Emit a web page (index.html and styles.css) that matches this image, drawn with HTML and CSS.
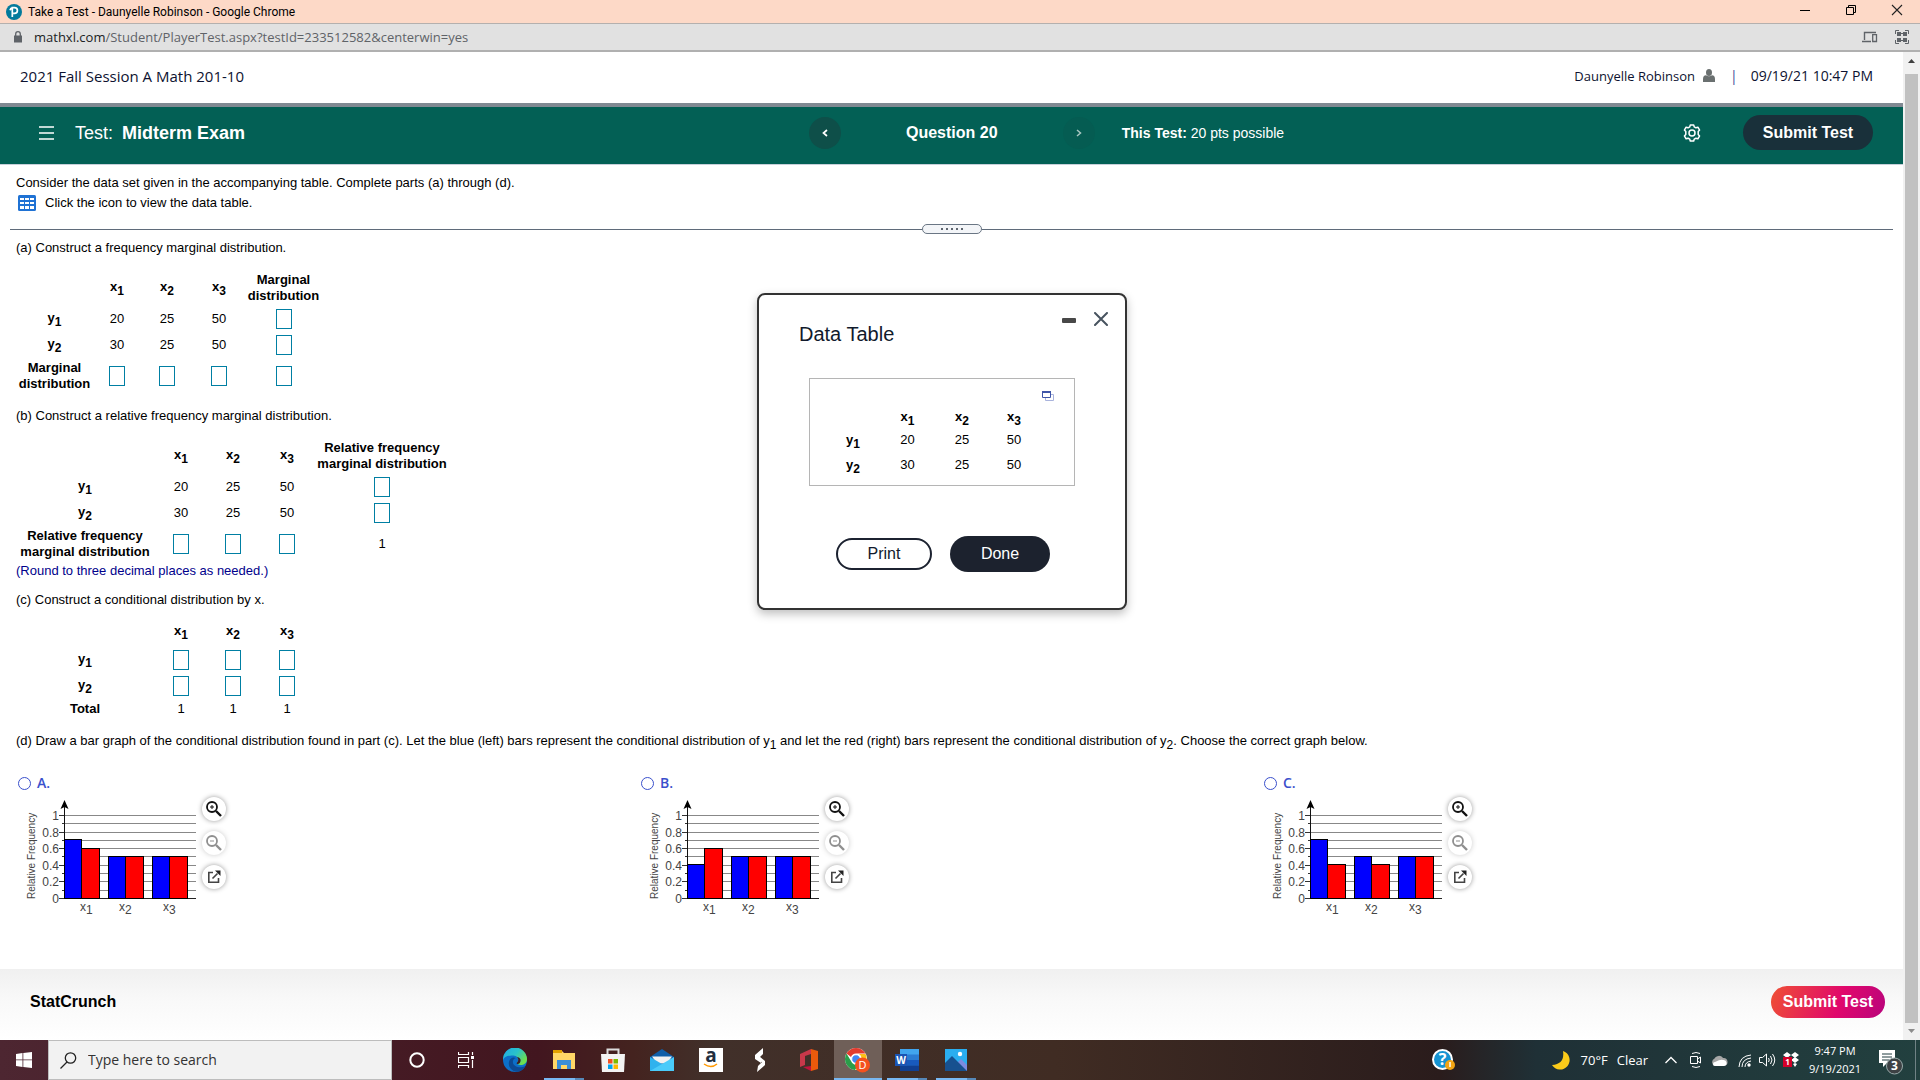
FILE: index.html
```
<!DOCTYPE html>
<html lang="en">
<head>
<meta charset="utf-8">
<title>Take a Test - Daunyelle Robinson</title>
<link rel="stylesheet" href="styles.css">
</head>
<body>
<div class="titlebar">
  <svg class="favicon" width="16" height="16" viewBox="0 0 16 16"><circle cx="8" cy="8" r="8" fill="#047a9c"/><path d="M6.3 13V3.6h2.2a2.9 2.9 0 0 1 0 5.8H7.2M4 6.2A4 4 0 0 1 6.3 3.6" fill="none" stroke="#fff" stroke-width="1.7"/></svg>
  <span class="window-title">Take a Test - Daunyelle Robinson - Google Chrome</span>
  <div class="window-controls">
    <button aria-label="Minimize"><svg width="12" height="12"><path d="M1 6.5h10" stroke="#000"/></svg></button>
    <button aria-label="Restore"><svg width="12" height="12" fill="none" stroke="#000"><path d="M1.5 3.500h7v7h-7zM3.500 3.500v-2h7v7h-2"/></svg></button>
    <button aria-label="Close"><svg width="12" height="12"><path d="M1 1l10 10M11 1L1 11" stroke="#222" stroke-width="1.100"/></svg></button>
  </div>
</div>
<div class="urlbar">
  <svg width="10" height="12" viewBox="0 0 10 12"><path d="M1 4.500h8v7H1z" fill="#5f6368"/><path d="M2.700 5V3a2.300 2.300 0 0 1 4.600 0v2" fill="none" stroke="#5f6368" stroke-width="1.300"/></svg>
  <span class="url"><b>mathxl.com</b>/Student/PlayerTest.aspx?testId=233512582&amp;centerwin=yes</span>
  <svg class="devices" width="16" height="12" viewBox="0 0 16 12" fill="none" stroke="#5f6368"><path d="M2.500 9V1.500H14M0 10.500h9" stroke-width="1.400"/><path d="M10.700 3.700h3.800v6.800h-3.800z" stroke-width="1.300"/></svg>
  <svg class="qr" width="14" height="14" viewBox="0 0 14 14"><path d="M.500 4V.500H4M10 .500h3.500V4M13.500 10v3.500H10M4 13.500H.500V10" fill="none" stroke="#5f6368"/><path d="M2 2h4v4H2zM8 2h4v4H8zM2 8h4v4H2zM8 8h4v4H8zM6 3h2v1H6zM6 10h2v1H6z" fill="#5f6368"/></svg>
</div>

<div class="viewport">
<div class="page">
  <header class="course">
    <span class="course-name">2021 Fall Session A Math 201-10</span>
    <span class="user">Daunyelle Robinson</span>
    <svg width="12" height="13" viewBox="0 0 12 13" fill="#6a7070"><ellipse cx="6" cy="3.500" rx="3" ry="3.500"/><path d="M0 13v-3q0-3.500 3-3.700 3 2 6 0 3 .200 3 3.700v3z"/></svg>
    <span class="bar">|</span>
    <span class="clock-text">09/19/21 10:47 PM</span>
  </header>

  <div class="testbar">
    <div class="test-left">
      <button aria-label="Menu"><svg width="15" height="14"><path d="M0 1h15M0 7h15M0 13h15" stroke="#fff" stroke-width="1.500"/></svg></button>
      <h1><span>Test:</span><strong>Midterm Exam</strong></h1>
    </div>
    <nav class="question-nav" aria-label="Questions">
      <button class="prev" aria-label="Previous question"><svg width="6" height="8"><path d="M5 1L1.500 4 5 7" fill="none" stroke="#fff" stroke-width="1.700"/></svg></button>
      <strong>Question 20</strong>
      <button class="next" aria-label="Next question"><svg width="6" height="8"><path d="M1 1l3.500 3L1 7" fill="none" stroke="#a9c7c2" stroke-width="1.500"/></svg></button>
    </nav>
    <div class="test-right">
      <span class="points"><b>This Test:</b> 20 pts possible</span>
      <button class="gear" aria-label="Settings"><svg width="18" height="18" viewBox="0 0 18 18" fill="none" stroke="#fff" stroke-width="1.500"><path d="M6.700 2.900 7.300 1h3.400l.600 1.900 1.600.900 2-.600 1.700 2.900-1.400 1.500v2.800l1.400 1.500-1.700 2.900-2-.600-1.600.900-.600 1.900H7.300l-.600-1.900-1.600-.900-2 .600-1.700-2.900 1.400-1.500V7.600L1.400 6.100l1.700-2.900 2 .600z" stroke-linejoin="round"/><circle cx="9" cy="9" r="3"/></svg></button>
      <button class="submit-dark">Submit Test</button>
    </div>
  </div>

  <main>
    <section class="prompt">
      <p>Consider the data set given in the accompanying table. Complete parts (a) through (d).</p>
      <p class="icon-line">
        <button aria-label="View the data table"><svg width="18" height="16" viewBox="0 0 18 16"><rect width="18" height="16" rx="1.500" fill="#1f72d4"/><path d="M2 3h4v2H2zM7 3h4v2H7zM12 3h4v2h-4zM2 7h4v2H2zM7 7h4v2H7zM12 7h4v2h-4zM2 11h4v3H2zM7 11h4v3H7zM12 11h4v3h-4z" fill="#fff"/></svg></button>
        <span>Click the icon to view the data table.</span>
      </p>
    </section>
    <div class="divider"><hr><button aria-label="Resize panels"><i></i><i></i><i></i><i></i><i></i></button><hr></div>

    <section class="work">
      <p>(a) Construct a frequency marginal distribution.</p>
      <table class="freq">
        <colgroup><col class="w77"><col class="w48"><col class="w52"><col class="w52"><col class="w77"></colgroup>
        <tr class="tall"><td></td><th>x<sub>1</sub></th><th>x<sub>2</sub></th><th>x<sub>3</sub></th><th>Marginal distribution</th></tr>
        <tr><th>y<sub>1</sub></th><td>20</td><td>25</td><td>50</td><td><input aria-label="y1 marginal"></td></tr>
        <tr><th>y<sub>2</sub></th><td>30</td><td>25</td><td>50</td><td><input aria-label="y2 marginal"></td></tr>
        <tr class="tall"><th>Marginal distribution</th><td><input aria-label="x1 marginal"></td><td><input aria-label="x2 marginal"></td><td><input aria-label="x3 marginal"></td><td><input aria-label="Total"></td></tr>
      </table>
      <p>(b) Construct a relative frequency marginal distribution.</p>
      <table class="freq">
        <colgroup><col class="w138"><col class="w54"><col class="w50"><col class="w58"><col class="w132"></colgroup>
        <tr class="tall"><td></td><th>x<sub>1</sub></th><th>x<sub>2</sub></th><th>x<sub>3</sub></th><th>Relative frequency marginal distribution</th></tr>
        <tr><th>y<sub>1</sub></th><td>20</td><td>25</td><td>50</td><td><input aria-label="y1 relative marginal"></td></tr>
        <tr><th>y<sub>2</sub></th><td>30</td><td>25</td><td>50</td><td><input aria-label="y2 relative marginal"></td></tr>
        <tr class="tall"><th>Relative frequency marginal distribution</th><td><input aria-label="x1 relative marginal"></td><td><input aria-label="x2 relative marginal"></td><td><input aria-label="x3 relative marginal"></td><td>1</td></tr>
      </table>
      <p class="hint">(Round to three decimal places as needed.)</p>
      <p>(c) Construct a conditional distribution by x.</p>
      <table class="freq">
        <colgroup><col class="w138"><col class="w54"><col class="w50"><col class="w58"></colgroup>
        <tr class="cond-head"><td></td><th>x<sub>1</sub></th><th>x<sub>2</sub></th><th>x<sub>3</sub></th></tr>
        <tr><th>y<sub>1</sub></th><td><input aria-label="y1 given x1"></td><td><input aria-label="y1 given x2"></td><td><input aria-label="y1 given x3"></td></tr>
        <tr><th>y<sub>2</sub></th><td><input aria-label="y2 given x1"></td><td><input aria-label="y2 given x2"></td><td><input aria-label="y2 given x3"></td></tr>
        <tr class="short"><th>Total</th><td>1</td><td>1</td><td>1</td></tr>
      </table>
      <p class="part-d">(d) Draw a bar graph of the conditional distribution found in part (c). Let the blue (left) bars represent the conditional distribution of y<sub>1</sub> and let the red (right) bars represent the conditional distribution of y<sub>2</sub>. Choose the correct graph below.</p>
      <div class="options">
        <div class="option">
          <label><input type="radio" name="graph">A.</label>
          <div class="figure" data-bars="0.71,0.6,0.51,0.51,0.51,0.51"></div>
        </div>
        <div class="option">
          <label><input type="radio" name="graph">B.</label>
          <div class="figure" data-bars="0.41,0.6,0.51,0.51,0.51,0.51"></div>
        </div>
        <div class="option">
          <label><input type="radio" name="graph">C.</label>
          <div class="figure" data-bars="0.71,0.41,0.51,0.41,0.51,0.51"></div>
        </div>
      </div>
    </section>

    <div class="dialog" role="dialog" aria-labelledby="dt">
      <div class="dialog-head">
        <h2 id="dt">Data Table</h2>
        <button aria-label="Minimize"><svg width="14" height="14"><rect y="6" width="14" height="5" rx="1" fill="#484848"/></svg></button>
        <button aria-label="Close"><svg width="14" height="14"><path d="M1 1l12 12M13 1L1 13" stroke="#47535f" stroke-width="2" stroke-linecap="round"/></svg></button>
      </div>
      <div class="data-box">
        <button aria-label="Copy data"><svg width="12" height="10" fill="none"><path d="M9 3.500h2.500v6h-8V7" stroke="#a9b3dc"/><path d="M.500 1v5.500h8V1" stroke="#3f55a8"/><path d="M0 1h9" stroke="#3f55a8" stroke-width="2"/></svg></button>
        <table>
          <colgroup><col class="w54"><col class="w55"><col class="w54"><col class="w50"></colgroup>
          <tr class="heads"><td></td><th>x<sub>1</sub></th><th>x<sub>2</sub></th><th>x<sub>3</sub></th></tr>
          <tr><th>y<sub>1</sub></th><td>20</td><td>25</td><td>50</td></tr>
          <tr><th>y<sub>2</sub></th><td>30</td><td>25</td><td>50</td></tr>
        </table>
      </div>
      <div class="dialog-actions"><button class="print">Print</button><button class="done">Done</button></div>
    </div>
  </main>

  <footer><a href="#">StatCrunch</a><button class="submit-pink">Submit Test</button></footer>
</div>
<div class="scrollbar" aria-hidden="true">
  <svg width="17" height="22"><path d="M5 11h7L8.500 7z" fill="#404040"/></svg>
  <div class="thumb"></div>
  <svg width="17" height="17"><path d="M5 6h7l-3.500 4z" fill="#8c8c8c"/></svg>
</div>
</div>

<div class="taskbar">
  <button class="start" aria-label="Start"><svg width="16" height="16" fill="#fff"><path d="M0 2l6.500-1v6.500H0zM7.300.900 16 0v7.500H7.300zM0 8.300h6.500V15L0 14zM7.300 8.300H16V16l-8.700-1z"/></svg></button>
  <label class="search">
    <svg width="17" height="17" fill="none" stroke="#222" stroke-width="1.300"><circle cx="10.500" cy="6" r="5.200"/><path d="M7 10L.500 16.500"/></svg>
    <input type="text" placeholder="Type here to search" aria-label="Search">
  </label>
  <div class="apps">
    <button aria-label="Cortana"><svg width="16" height="16"><circle cx="8" cy="8" r="6.700" fill="none" stroke="#fff" stroke-width="2"/></svg></button>
    <button aria-label="Task View"><svg width="17" height="16" fill="none" stroke="#fff"><path d="M.500 0v2.500h10V0M.500 5.500h10v5H.500zM.500 16v-2.500h10V16M14.500 0v3M14.500 8v8" stroke-width="1.200"/><path d="M13 4h3v3h-3z" fill="#fff" stroke="none"/></svg></button>
    <button aria-label="Edge"><svg width="24" height="24" viewBox="0 0 24 24"><defs><linearGradient id="e1" x1="0" y1="0" x2="1" y2=".6"><stop offset="0" stop-color="#1fa8e8"/><stop offset=".55" stop-color="#2ac3c9"/><stop offset="1" stop-color="#6fe04b"/></linearGradient></defs><circle cx="12" cy="12" r="12" fill="#0c6fc9"/><path d="M0 12A12 12 0 0 1 24 11c0 4-3 6-6.500 6-3 0-4-1.500-3-3 1.500-2 1-6-4-6.500C5 7 1 9 0 12z" fill="url(#e1)"/><path d="M8 10.500C3 15 7 23.500 14 23.700c4-.200 7-2.700 8.300-5.500C16 21 9 18 10 13c.500-2 2-3 3-2.500-1.500-1.500-3.500-1.500-5 0z" fill="#0c4a94"/><path d="M14.500 14c1.200-1.500 1-3.500-.500-5 1.500 0 3 1 3.500 2.500S17 16 15 16s-1.300-1-.500-2z" fill="#3f1d24"/></svg></button>
    <button class="open" aria-label="File Explorer"><svg width="22" height="20"><path d="M0 1h9l2 2h11v16H0z" fill="#ffd767"/><path d="M0 0h9v3H0z" fill="#e2a100"/><path d="M4 10h14v9h-4v-4H8v4H4z" fill="#3a8ed8"/></svg></button>
    <button aria-label="Microsoft Store"><svg width="24" height="24"><path d="M6.500 8V1.500h11V8" fill="none" stroke="#ddd" stroke-width="2"/><path d="M0 6h24l-1 18H1z" fill="#f3f3f3"/><path d="M7 11h4.500v4.500H7z" fill="#f25022"/><path d="M12.500 11H17v4.500h-4.500z" fill="#7fba00"/><path d="M7 16.500h4.500V21H7z" fill="#00a4ef"/><path d="M12.500 16.500H17V21h-4.500z" fill="#ffb900"/></svg></button>
    <button aria-label="Mail"><svg width="24" height="22"><path d="M0 8l12-8 12 8v14H0z" fill="#0f5ea8"/><path d="M2 7.500h20l-5 7H7z" fill="#f1f1f1"/><path d="M0 8l24 14H0z" fill="#2fb2ee"/><path d="M24 8v14H0z" fill="#4acbfa"/></svg></button>
    <button aria-label="Amazon"><span class="amazon">a<svg width="16" height="6"><path d="M1 1q7 5 13 0" fill="none" stroke="#f90" stroke-width="1.500"/></svg></span></button>
    <button aria-label="Swift player"><svg width="12" height="24" fill="#fff"><path d="M9 0L1 7v4l6 4 1-2-3-3 4-4zM3 24l8-7v-4L5 8 4 11l4 3-4 4z"/></svg></button>
    <button aria-label="Office"><svg width="18" height="22"><path d="M0 5l11-5v5L5 7v9l-5 2z" fill="#c8384a"/><path d="M11 0l7 2v18l-7 2z" fill="#ea5a0c"/><path d="M3 18l8-1v5z" fill="#c0143c"/></svg></button>
    <button class="open active" aria-label="Chrome"><svg width="26" height="26" viewBox="0 0 26 26"><circle cx="11" cy="12" r="11" fill="#fff"/><path d="M1.500 6.500A11 11 0 0 1 20.500 6.500H11a5.500 5.500 0 0 0-5 3.500z" fill="#e33b2e"/><path d="M1.500 6.500A11 11 0 0 0 10 23l4-6a5.500 5.500 0 0 1-8-3z" fill="#2a9d4a"/><path d="M20.500 7A11 11 0 0 1 10.500 23l5-8a5.500 5.500 0 0 0-1.500-8z" fill="#fbc116"/><circle cx="11" cy="12" r="4.300" fill="#4285f4" stroke="#fff"/><circle cx="17.500" cy="18" r="7.500" fill="#f4511e"/><text x="17.500" y="22" text-anchor="middle" font-size="11" fill="#fff">D</text></svg></button>
    <button class="open" aria-label="Word"><svg width="24" height="22"><path d="M5 0h19v22H5z" fill="#2b7cd3"/><path d="M5 0h19v5.500H5z" fill="#41a5ee"/><path d="M5 11h19v5.500H5z" fill="#185abd"/><path d="M5 16.500h19V22H5z" fill="#103f91"/><path d="M0 5h12v12H0z" fill="#1b55b4"/><text x="6" y="15" text-anchor="middle" font-size="10" font-weight="bold" fill="#fff">W</text></svg></button>
    <button class="open" aria-label="Photos"><svg width="22" height="22"><path d="M0 0h22v22H0z" fill="#2aaef0"/><path d="M12 14l4-4 6 6v6H12z" fill="#7b8ae0"/><path d="M0 14l7-7 15 15H0z" fill="#17518f"/><circle cx="15" cy="5" r="2.200" fill="#fff"/></svg></button>
  </div>
  <div class="tray">
    <svg class="help" width="24" height="22"><circle cx="10.500" cy="10.500" r="9.500" fill="#1593d2" stroke="#fff" stroke-width="2"/><text x="10.500" y="16" text-anchor="middle" font-size="16" font-weight="bold" fill="#fff">?</text><circle cx="18" cy="16" r="5" fill="#f2a413"/><path d="M18 13v5" stroke="#fff" stroke-width="1.500"/></svg>
    <svg class="moon" width="19" height="19"><path d="M11 0a9.500 9.500 0 1 1-11 14Q13 13 11 0z" fill="#fccb1a"/></svg>
    <span>70°F</span><span class="sky">Clear</span>
    <svg class="chev" width="12" height="8"><path d="M.500 7L6 1.500 11.500 7" fill="none" stroke="#fff" stroke-width="1.300"/></svg>
    <svg class="meet" width="12" height="16" fill="none" stroke="#fff"><path d="M2 1.500Q6-.500 10 1.500M2 14.500q4 2 8 0M.500 4.500h7v7h-7zM7.500 7l3-2v6l-3-2"/></svg>
    <svg class="cloud" width="17" height="11"><path d="M4 11a4 4 0 0 1-.500-7.500A5 5 0 0 1 12 3a4 4 0 0 1 1 8z" fill="#a7a7a7"/><path d="M4 11a2 2 0 0 1 0-4q6-3 8-2a3 3 0 0 1 1 6z" fill="#fff"/></svg>
    <svg class="wifi" width="14" height="13" fill="none" stroke="#fff"><path d="M1 13Q1.500 2 13 1M4 13q0-8 9-9M7 13q0-5 6-6"/><circle cx="11" cy="11" r="1.700" fill="#fff" stroke="none"/></svg>
    <svg class="vol" width="17" height="14" fill="none" stroke="#fff"><path d="M.500 4.500h3L7.500 1v12l-4-3.500h-3zM9.500 5q1.500 2 0 4M11.500 3q3 4 0 8M13.500 1q4.500 6 0 12"/></svg>
    <svg class="dropbox" width="17" height="18"><path d="M0 4l4-3 4 3-4 3zM8 4l4-3 4 3-4 3zM8 9l4-3 4 3-4 3zM10 13l2-1 2 1-2 3z" fill="#fff"/><path d="M0 6h9v10H0z" fill="#d40028"/><text x="4.500" y="14" text-anchor="middle" font-size="8" font-weight="bold" fill="#fff">1</text></svg>
    <time>9:47 PM<br>9/19/2021</time>
    <button aria-label="3 notifications"><svg width="24" height="25"><path d="M0 0h16v13H8l-4 4v-4H0z" fill="#fff"/><path d="M3 4h10M3 7h10M3 10h7" stroke="#213a3e"/><circle cx="15.500" cy="16" r="8" fill="#3d4144" stroke="#9aa"/><text x="15.500" y="20" text-anchor="middle" font-size="12" font-weight="bold" fill="#fff">3</text></svg></button>
    <i class="peek"></i>
  </div>
</div>
<script src="charts.js"></script>
</body>
</html>
```
FILE: styles.css
```
* { box-sizing: border-box; }
body {
  margin: 0;
  min-height: 100vh;
  display: flex;
  flex-direction: column;
  font: 13px/16px "Liberation Sans", Arial, sans-serif;
  color: #000;
  background: #fff;
}
button { border: 0; padding: 0; margin: 0; background: none; font: inherit; color: inherit; display: flex; align-items: center; justify-content: center; }
svg { display: block; flex: none; }
p, h1, h2 { margin: 0; font-weight: normal; }
sub { font-size: 12px; line-height: 0; vertical-align: -4px; }

/* browser window */
.titlebar { display: flex; align-items: center; height: 24px; padding-left: 6px; background: #fdd9c7; border-bottom: 1px solid #b4b0ae; font: 12px/16px Roboto, sans-serif; }
.window-title { margin-left: 6px; flex: 1; }
.window-controls { display: flex; align-self: flex-start; }
.window-controls button { width: 46px; height: 20px; }
.urlbar { display: flex; align-items: center; height: 28px; padding: 0 11px 0 13px; background: #e1e1e1; border-bottom: 2px solid #b0b0b0; font: 13px/18px "Open Sans", sans-serif; color: #5f6368; }
.url { margin-left: 11px; flex: 1; }
.url b { font-weight: normal; color: #202124; }
.qr { margin-left: 17px; }

.viewport { flex: 1; display: flex; }
.page { flex: 1; display: flex; flex-direction: column; }
.scrollbar { width: 17px; display: flex; flex-direction: column; background: #f1f1f1; }
.thumb { flex: 1; margin: 0 2px; background: #c1c1c1; }

.course { display: flex; align-items: center; height: 51px; padding: 0 30px 3px 20px; font-family: "Open Sans", sans-serif; color: #0d1230; }
.course-name { flex: 1; font-size: 15px; }
.course svg { margin: 0 15px 2px 8px; }
.user { padding-bottom: 1px; }
.bar { color: #3f4a9a; margin-right: 13px; font-size: 14px; }
.clock-text { font-size: 14px; }

.testbar { display: grid; grid-template-columns: 42.5% 286px 1fr; height: 62px; padding-bottom: 6px; border-top: 4px solid #808992; border-bottom: 1px solid #c7cfd9; background: #036055; color: #fff; font-size: 16px; }
.test-left { display: flex; align-items: center; padding-left: 39px; }
.test-left h1 { display: flex; gap: 9px; margin-left: 21px; font-size: 18px; }
.question-nav { display: flex; align-items: center; justify-content: space-between; }
.question-nav button { width: 32px; height: 32px; border-radius: 50%; }
.prev { background: #0e4f49; }
.next { background: #055c52; }
.test-right { display: flex; align-items: center; padding: 0 30px 0 27px; }
.points { flex: 1; font-size: 14px; }
.submit-dark { width: 130px; height: 35px; margin-left: 42px; border-radius: 18px; background: #19303a; font-weight: bold; }

main { flex: 1; position: relative; }
.prompt { padding: 10px 16px 13px; }
.icon-line { display: flex; align-items: center; gap: 9px; padding: 4px 0 0 2px; }
.divider { display: flex; align-items: center; margin: 0 10px; }
.divider hr { flex: 1; margin: 0; border: 0; border-top: 1px solid #5f6b7a; }
.divider button { width: 60px; height: 10px; gap: 3px; border: 1px solid #6a7684; border-radius: 5px; background: #f3f5f8; }
.divider i { width: 2px; height: 2px; background: #5f6670; }
.work { padding: 6px 18px 0 16px; }

table { border-collapse: collapse; table-layout: fixed; }
th, td { padding: 0; text-align: center; vertical-align: middle; }
th:has(sub) { padding-bottom: 3px; }
.w48 { width: 48px; }
.w50 { width: 50px; }
.w52 { width: 52px; }
.w54 { width: 54px; }
.w55 { width: 55px; }
.w58 { width: 58px; }
.w77 { width: 77px; }
.w132 { width: 132px; }
.w138 { width: 138px; }
.freq { width: 0; margin: 14px 0; }
.freq tr { height: 26px; }
.freq .tall { height: 36px; }
.freq .short { height: 19px; }
.freq .cond-head { height: 25px; }
.freq .cond-head th { padding-bottom: 7px; }
.freq input { display: block; width: 16px; height: 20px; margin: 0 auto; padding: 0; border: 1px solid #007fa3; border-radius: 0; background: #fff; }
.hint { color: #00008b; margin: -13px 0 13px; }
.part-d { margin: 15px 0 24px; }

.options { display: grid; grid-template-columns: repeat(3, 1fr); }
.option label { display: flex; align-items: center; gap: 6px; height: 20px; padding-left: 2px; font: 600 14px/20px "Open Sans", sans-serif; color: #3a50cc; }
.option input { appearance: none; width: 13px; height: 13px; margin: 0; border: 1px solid #3a50cc; border-radius: 50%; background: #fff; }
.figure { display: flex; gap: 2px; padding-top: 2px; }
.figure text { font-size: 12px; fill: #444; }
.figure .axis-name { font-size: 10px; }
.tools { display: flex; flex-direction: column; gap: 10px; padding-top: 2px; }
.tools button { width: 24px; height: 24px; border-radius: 50%; background: #fff; box-shadow: 0 0 5px #999; }
.tools button:disabled { opacity: .5; }

.dialog { position: absolute; left: 757px; top: 128px; width: 370px; height: 317px; border: 2px solid #333; border-radius: 8px; background: #fff; box-shadow: 0 4px 10px rgba(0, 0, 0, .25); color: #111a2c; }
.dialog-head { display: flex; align-items: flex-start; gap: 18px; padding: 17px 17px 0 40px; }
.dialog h2 { flex: 1; padding-top: 10px; font-size: 20px; line-height: 24px; }
.data-box { display: flex; flex-direction: column; width: 266px; height: 108px; margin: 32px 0 0 50px; border: 1px solid #b5b5b5; color: #000; }
.data-box button { align-self: flex-end; margin: 12px 20px 6px 0; }
.data-box table { width: 0; margin-left: 16px; }
.data-box tr { height: 25px; }
.data-box .heads { height: 20px; }
.data-box th { padding: 0; }
.dialog-actions { display: flex; align-items: center; justify-content: center; gap: 18px; margin-top: 50px; padding-left: 2px; font-size: 16px; }
.print { width: 96px; height: 32px; border: 2px solid #1c2230; border-radius: 16px; }
.done { width: 100px; height: 36px; border-radius: 18px; background: #1c222e; color: #fff; }

footer { display: flex; align-items: center; justify-content: space-between; height: 71px; padding: 0 18px 6px 30px; background: linear-gradient(#f0f0f0, #f8f8f8 40%, #fff); font-size: 16px; font-weight: bold; }
footer a { color: #000; text-decoration: none; }
.submit-pink { width: 114px; height: 32px; border-radius: 16px; background: linear-gradient(110deg, #ef5034, #e0076c 60%, #b8047c); color: #fff; }

/* desktop taskbar */
.taskbar { display: flex; height: 40px; background: linear-gradient(90deg, #4d2631, #42161f 28%, #44231f 33%, #41302a 37%, #402c23 55%, #2a1c1c 75%, #1f3036 80%, #22403f); color: #fff; font: 13px/18px "Open Sans", sans-serif; }
.start { width: 48px; }
.search { display: flex; align-items: center; gap: 11px; width: 344px; padding-left: 11px; background: #f2f2f2; border: 1px solid #bdbdbd; }
.search input { flex: 1; border: 0; padding: 0; background: none; font: 14px/20px "Open Sans", sans-serif; color: #333; }
.search input::placeholder { color: #333; opacity: 1; }
.apps { display: flex; gap: 1px; padding-left: 1px; }
.apps button { width: 48px; height: 40px; }
.apps .open { background: linear-gradient(90deg, #78b8f2 78%, #5688b8 78%) center bottom / 40px 2px no-repeat; }
.apps .active { background: linear-gradient(#78b8f2, #78b8f2) center bottom / 48px 2px no-repeat, #6f5f58; }
.amazon { display: flex; flex-direction: column; align-items: center; width: 24px; height: 24px; background: #fff; color: #222e3e; font-weight: bold; font-size: 19px; line-height: 15px; }
.tray { flex: 1; display: flex; align-items: center; justify-content: flex-end; }
.help { margin-right: 96px; }
.moon { margin-right: 10px; }
.sky { margin: 0 17px 0 9px; }
.chev { margin-right: 13px; }
.meet { margin-right: 9px; }
.cloud { margin-right: 10px; }
.wifi { margin-right: 7px; }
.vol { margin-right: 7px; }
.dropbox { margin-right: 9px; }
.tray time { font-size: 11px; text-align: center; width: 52px; margin-right: 18px; }
.tray button { margin: 4px 12px 0 0; }
.peek { width: 5px; align-self: stretch; border-left: 1px solid #708285; }
```
FILE: charts.js
```
// Draws each answer's bar chart from its six bar heights.
const BASE = 103.5;
const LEFT = 48.5;
const y = v => BASE - Math.round(83 * v);
const bars = [[0, 17], [17, 18], [44, 17], [61, 18], [88, 17], [105, 18]];
const tools = `<div class="tools">
<button aria-label="Zoom in"><svg width="18" height="18" fill="none" stroke="#111"><circle cx="7" cy="7" r="5" stroke-width="1.8"/><path d="M11 11l5 5" stroke-width="2.4"/><path d="M7 5v4M5 7h4"/></svg></button>
<button aria-label="Zoom out" disabled><svg width="18" height="18" fill="none" stroke="#222"><circle cx="7" cy="7" r="5" stroke-width="1.8"/><path d="M11 11l5 5" stroke-width="2.4"/><path d="M5 7h4"/></svg></button>
<button aria-label="Open graph"><svg width="14" height="14" fill="none" stroke="#444" stroke-width="1.6"><path d="M6 2.500H1.800v9.700h9.700V8M5.500 8.500L10.500 3.500"/><path d="M8 .500h5.500V6z" fill="#222" stroke="none"/></svg></button>
</div>`;
for (const fig of document.querySelectorAll(".figure")) {
  let s = "";
  for (let i = 0; i <= 10; i++) {
    const gy = y(i / 10);
    s += `<path d="M${LEFT} ${gy}H180" stroke="${i ? "#888" : "#222"}"/><path d="M${i % 2 ? 46 : 43} ${gy}H${LEFT}" stroke="#333"/>`;
    if (i % 2 === 0) s += `<text x="43" y="${gy + 4}" text-anchor="end">${i / 10}</text>`;
  }
  s += `<path d="M${LEFT} ${BASE}V8" stroke="#111"/><path d="M${LEFT} 5l4 9-4-2-4 2z"/>`;
  fig.dataset.bars.split(",").forEach((v, i) => {
    s += `<rect x="${LEFT + bars[i][0]}" y="${y(v)}" width="${bars[i][1]}" height="${BASE - y(v)}" fill="${i % 2 ? "#f00" : "#00f"}" stroke="#000"/>`;
  });
  [64, 103, 147].forEach((x, i) => {
    s += `<text x="${x}" y="116">x<tspan dy="3">${i + 1}</tspan></text>`;
  });
  s += `<text class="axis-name" transform="translate(19 104) rotate(-90)">Relative Frequency</text>`;
  fig.innerHTML = `<svg width="184" height="124" role="img" aria-label="Bar graph">${s}</svg>${tools}`;
}
```
